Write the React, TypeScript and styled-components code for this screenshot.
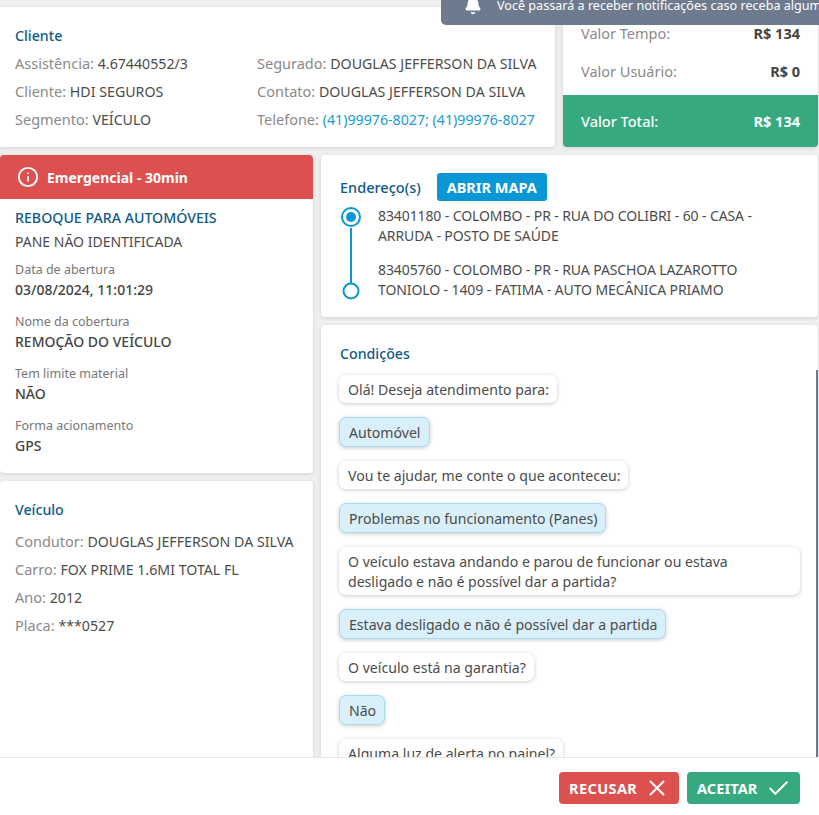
import React from 'react';
import styled, { createGlobalStyle } from 'styled-components';
import { Bell, Check, Info, X } from 'lucide-react';

const Global = createGlobalStyle`
  html, body { margin: 0; padding: 0; height: 100%; overflow: hidden; }
  body { font-family: "Noto Sans", "Open Sans", sans-serif; font-size: 14.5px; color: #4a4a4a; background: #efefef; }
  * { box-sizing: border-box; }
`;

const Page = styled.div`
  height: 815px; display: flex; flex-direction: column; position: relative; overflow: hidden;
`;
const Main = styled.div`
  flex: 1; min-height: 0; overflow: hidden; padding: 7px 1px 0 0;
  display: grid; grid-template-columns: 313px 1fr; grid-template-rows: 140px 1fr; gap: 8px;
`;
const Card = styled.section`
  background: #fff; border-radius: 4px; box-shadow: 0 1px 4px rgba(0,0,0,.12); overflow: hidden;
`;
const Top = styled.div`
  grid-column: 1 / 3; display: grid; grid-template-columns: 555px 1fr; gap: 8px;
`;
const ClientCard = styled(Card)`
  padding: 18px 15px 0; display: grid; grid-template-columns: 242px 1fr; grid-auto-rows: 28px; border-radius: 0 4px 4px 0;
`;
const Title = styled.h2`
  margin: 0; font-size: 14.2px; font-weight: 500; color: #0f5a85; line-height: 22px;
`;
const ClientTitle = styled(Title)`grid-column: 1 / 3; height: 28px;`;
const Line = styled.div`
  height: 20px; line-height: 20px; color: #8a8a8a; white-space: nowrap;
  b { font-weight: 400; color: #4c4c4c; font-size: 14.2px; }
  a { color: #1a9ad6; text-decoration: none; font-size: 14.2px; }
`;
const Values = styled(Card)`
  display: flex; flex-direction: column; 
`;
const ValueRows = styled.div`
  flex: 1; padding: 16px 18px 0 18px; display: flex; flex-direction: column; gap: 18px;
`;
const ValueRow = styled.div`
  display: flex; justify-content: space-between; line-height: 20px; color: #8a8a8a;
  b { font-weight: 700; color: #444; }
`;
const Total = styled.div`
  height: 52px; background: #37a97f; color: #fff; padding: 0 18px; display: flex; justify-content: space-between; align-items: center; font-weight: 500;
  b { font-weight: 700; }
`;
const LeftCol = styled.div`display: flex; flex-direction: column; gap: 8px; min-height: 0;`;
const RightCol = styled.div`display: flex; flex-direction: column; gap: 8px; min-height: 0;`;
const ServiceCard = styled(Card)`height: 318px;`;
const Alert = styled.div`
  height: 44px; background: #dd5050; color: #fff; display: flex; align-items: center; gap: 8px; padding: 0 17px; font-weight: 700; font-size: 14px;
`;
const ServiceBody = styled.div`padding: 8px 15px 0;`;
const Sub = styled.div`line-height: 26px; color: #4c4c4c; margin-bottom: 5px; font-size: 14px;`;
const Field = styled.div`margin-bottom: 12px;`;
const Label = styled.div`font-size: 12.5px; line-height: 19px; color: #777;`;
const Value = styled.div`
  line-height: 21px; color: #444; font-weight: 500; font-size: 14px;
`;
const VehicleCard = styled(Card)`flex: 1; padding: 18px 15px; display: flex; flex-direction: column; gap: 8px; border-radius: 4px 4px 0 0;`;
const VehicleTitle = styled(Title)`margin-bottom: 2px;`;
const AddressCard = styled(Card)`height: 162px; padding: 18px 19px 0;`;
const AddressHead = styled.div`display: flex; align-items: center; gap: 16px; height: 28px;`;
const HeadTitle = styled(Title)`font-size: 14.5px; line-height: 20px;`;
const MapButton = styled.button`
  height: 28px; width: 110px; border: 0; border-radius: 3px; background: #0a97d6; color: #fff; font: 700 14.5px "Noto Sans", sans-serif; padding: 0;
`;
const Stops = styled.div`display: grid; grid-template-columns: 24px 1fr; column-gap: 15px; margin: 5px 0 0 -1px;`;
const Track = styled.svg`width: 24px; height: 96px;`;
const StopList = styled.div`display: flex; flex-direction: column; gap: 14px;`;
const Stop = styled.div`font-size: 14px; line-height: 20px; color: #4c4c4c; max-width: 400px; letter-spacing: -.1px;`;
const ConditionsCard = styled(Card)`flex: 1; padding: 18px 18px 0; position: relative; border-radius: 4px 4px 0 0;`;
const CondTitle = styled(Title)`margin-left: 1px;`;
const Chat = styled.div`display: flex; flex-direction: column; align-items: flex-start; gap: 14px; margin-top: 10px;`;
const Bubble = styled.div<{ $answer?: boolean }>`
  padding: 5px 8px 3px 9px; line-height: 20px; border-radius: 7px; max-width: 461px; font-size: 14.1px; color: #4c4c4c;
  background: ${p => (p.$answer ? '#d9eff9' : '#fff')};
  border: ${p => (p.$answer ? '1px solid #a9dcf2' : '0')};
  box-shadow: 0 1px 4px rgba(0,0,0,.2);
`;
const ScrollBar = styled.div`
  position: absolute; right: 0; top: 45px; bottom: 0; width: 2px; background: #6b7a90;
`;
const Footer = styled.footer`
  height: 58px; background: #fff; border-top: 1px solid #e6e6e6; display: flex; justify-content: flex-end; align-items: flex-start; gap: 8px; padding: 14px 19px 0 0; position: relative;
`;
const Action = styled.button<{ $bg: string; $w: number; $ls: number }>`
  height: 32px; width: ${p => p.$w}px; border: 0; border-radius: 4px; background: ${p => p.$bg}; color: #fff; font: 700 14.5px "Noto Sans", sans-serif; letter-spacing: ${p => p.$ls}px;
  display: flex; align-items: center; justify-content: space-between; padding: 0 9px 0 10px;
`;
const Toast = styled.div`
  position: absolute; top: 0; left: 441px; right: 0; height: 25px; background: #6e7b8f; color: #fff; border-radius: 0 0 0 5px;
  display: flex; align-items: flex-end; gap: 15px; padding: 0 0 11px 23px; font-size: 12.6px; white-space: nowrap; overflow: hidden;
`;
const ToastBell = styled(Bell)`flex: none; margin-bottom: -1px;`;

const stops = [
  '83401180 - COLOMBO - PR - RUA DO COLIBRI - 60 - CASA - ARRUDA - POSTO DE SAÚDE',
  '83405760 - COLOMBO - PR - RUA PASCHOA LAZAROTTO TONIOLO - 1409 - FATIMA - AUTO MECÂNICA PRIAMO',
];
const chat: [string, boolean][] = [
  ['Olá! Deseja atendimento para:', false],
  ['Automóvel', true],
  ['Vou te ajudar, me conte o que aconteceu:', false],
  ['Problemas no funcionamento (Panes)', true],
  ['O veículo estava andando e parou de funcionar ou estava desligado e não é possível dar a partida?', false],
  ['Estava desligado e não é possível dar a partida', true],
  ['O veículo está na garantia?', false],
  ['Não', true],
  ['Alguma luz de alerta no painel?', false],
];

export default function App() {
  return (
    <Page>
      <Global />
      <Main>
        <Top>
          <ClientCard>
            <ClientTitle>Cliente</ClientTitle>
            <Line>Assistência: <b>4.67440552/3</b></Line>
            <Line>Segurado: <b>DOUGLAS JEFFERSON DA SILVA</b></Line>
            <Line>Cliente: <b>HDI SEGUROS</b></Line>
            <Line>Contato: <b>DOUGLAS JEFFERSON DA SILVA</b></Line>
            <Line>Segmento: <b>VEÍCULO</b></Line>
            <Line>Telefone: <a>(41)99976-8027; (41)99976-8027</a></Line>
          </ClientCard>
          <Values>
            <ValueRows>
              <ValueRow>Valor Tempo:<b>R$ 134</b></ValueRow>
              <ValueRow>Valor Usuário:<b>R$ 0</b></ValueRow>
            </ValueRows>
            <Total>Valor Total:<b>R$ 134</b></Total>
          </Values>
        </Top>
        <LeftCol>
          <ServiceCard>
            <Alert><Info size={22} strokeWidth={2} />Emergencial - 30min</Alert>
            <ServiceBody>
              <Title>REBOQUE PARA AUTOMÓVEIS</Title>
              <Sub>PANE NÃO IDENTIFICADA</Sub>
              <Field><Label>Data de abertura</Label><Value>03/08/2024, 11:01:29</Value></Field>
              <Field><Label>Nome da cobertura</Label><Value>REMOÇÃO DO VEÍCULO</Value></Field>
              <Field><Label>Tem limite material</Label><Value>NÃO</Value></Field>
              <Field><Label>Forma acionamento</Label><Value>GPS</Value></Field>
            </ServiceBody>
          </ServiceCard>
          <VehicleCard>
            <VehicleTitle>Veículo</VehicleTitle>
            <Line>Condutor: <b>DOUGLAS JEFFERSON DA SILVA</b></Line>
            <Line>Carro: <b>FOX PRIME 1.6MI TOTAL FL</b></Line>
            <Line>Ano: <b>2012</b></Line>
            <Line>Placa: <b>***0527</b></Line>
          </VehicleCard>
        </LeftCol>
        <RightCol>
          <AddressCard>
            <AddressHead><HeadTitle>Endereço(s)</HeadTitle><MapButton>ABRIR MAPA</MapButton></AddressHead>
            <Stops>
              <Track viewBox="0 0 24 96">
                <line x1="12" y1="22" x2="12" y2="78" stroke="#0a97d6" strokeWidth="2" />
                <circle cx="12" cy="11" r="9" fill="none" stroke="#0a97d6" strokeWidth="2" />
                <circle cx="12" cy="11" r="5" fill="#0a97d6" />
                <circle cx="12" cy="85" r="7.5" fill="none" stroke="#0a97d6" strokeWidth="2" />
              </Track>
              <StopList>{stops.map(s => <Stop key={s}>{s}</Stop>)}</StopList>
            </Stops>
          </AddressCard>
          <ConditionsCard>
            <CondTitle>Condições</CondTitle>
            <Chat>{chat.map(([t, a]) => <Bubble key={t} $answer={a}>{t}</Bubble>)}</Chat>
            <ScrollBar />
          </ConditionsCard>
        </RightCol>
      </Main>
      <Footer>
        <Action $bg="#dd5050" $w={120} $ls={0.4}>RECUSAR <X size={26} strokeWidth={1.85} /></Action>
        <Action $bg="#37a97f" $w={113} $ls={0.1}>ACEITAR <Check size={25} strokeWidth={1.9} /></Action>
      </Footer>
      <Toast><ToastBell size={18} fill="#fff" />Você passará a receber notificações caso receba algum serviço</Toast>
    </Page>
  );
}
